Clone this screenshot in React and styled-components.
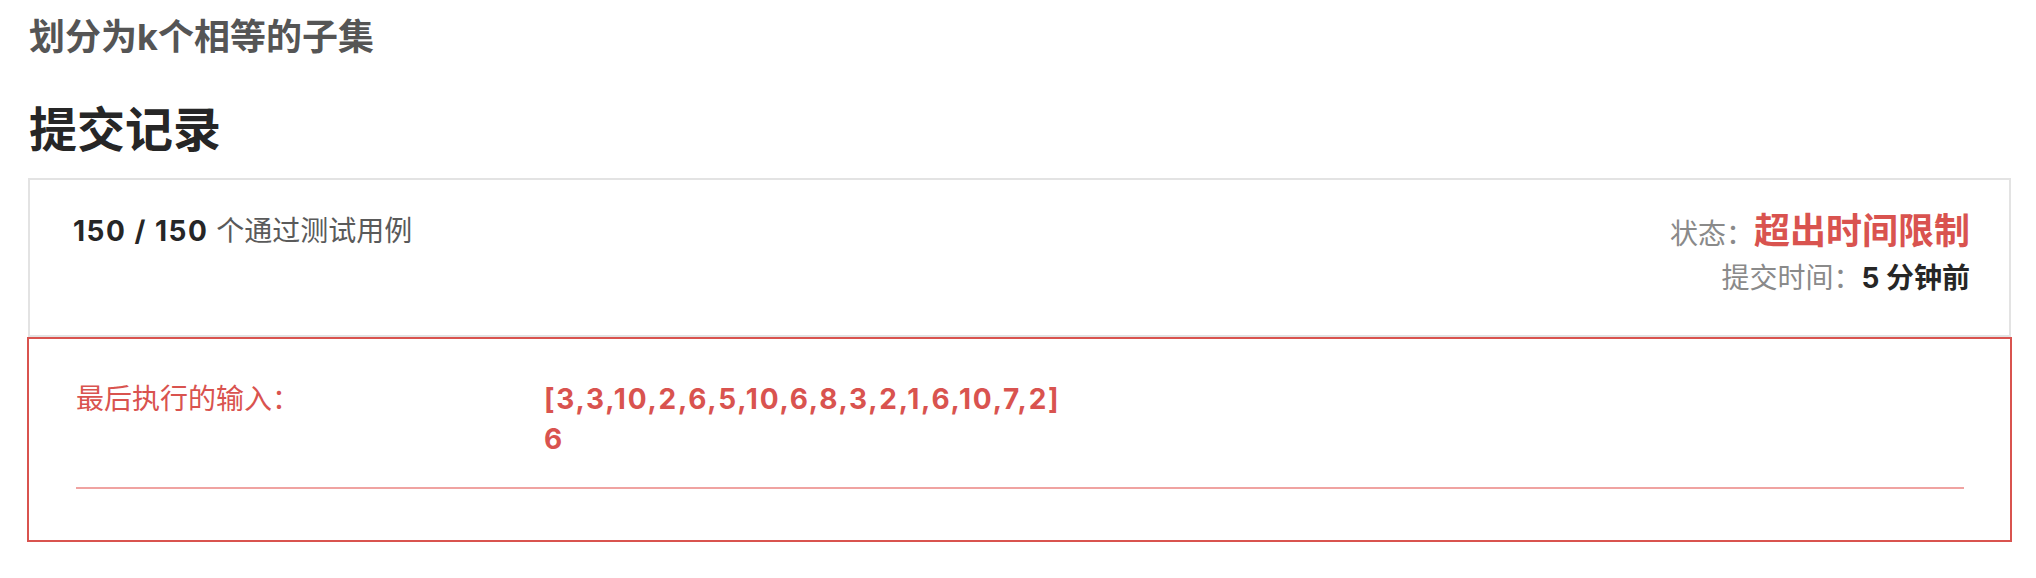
import React from "react";
import styled, { createGlobalStyle } from "styled-components";

const GlobalStyle = createGlobalStyle`
  body {
    margin: 0;
    background: #fff;
    font-family: Inter, "Noto Sans CJK SC", sans-serif;
  }
`;

const Page = styled.div`
  padding: 10px 25px 0 28px;
`;

const ProblemTitle = styled.div`
  font-size: 36px;
  line-height: 54px;
  font-weight: 700;
  color: #555;
  padding-left: 1px;
`;

const Heading = styled.h2`
  margin: 36px 0 18px;
  font-size: 48px;
  line-height: 60px;
  font-weight: 700;
  color: #262626;
  padding-left: 1px;
`;

const Panel = styled.div`
  border: 2px solid #e3e3e3;
  padding: 29px 39px 35px 43px;
  display: flex;
  justify-content: space-between;
  align-items: flex-start;
`;

const Passed = styled.div`
  font-size: 28px;
  line-height: 44px;
  color: #5a5a5a;
`;

const Strong = styled.b`
  font-weight: 700;
  color: ${({ tone }) => tone || "#262626"};
  font-size: ${({ big }) => (big ? "36px" : "inherit")};
  letter-spacing: ${({ spaced }) => (spaced ? "1.5px" : "0")};
`;

const Meta = styled.div`
  display: flex;
  flex-direction: column;
  align-items: flex-end;
`;

const MetaLine = styled.div`
  font-size: 28px;
  line-height: 44px;
  color: #8a8a8a;
  display: flex;
  align-items: baseline;
`;

const ErrorBox = styled.div`
  border: 2px solid #d9534f;
  margin: 0 -1px;
  padding: 40px 46px 51px 47px;
  color: #d9534f;
`;

const Row = styled.div`
  display: grid;
  grid-template-columns: 468px 1fr;
  font-size: 28px;
  line-height: 40px;
`;

const Label = styled.div`
  font-weight: 400;
`;

const Value = styled.div`
  font-weight: 700;
  letter-spacing: 1.75px;
  white-space: pre-line;
`;

const Rule = styled.hr`
  margin: 28px 0 0;
  border: 0;
  height: 2px;
  background: #f0a3a1;
`;

const App = () => (
  <>
    <GlobalStyle />
    <Page>
      <ProblemTitle>划分为k个相等的子集</ProblemTitle>
      <Heading>提交记录</Heading>
      <Panel>
        <Passed>
          <Strong spaced>150 / 150</Strong> 个通过测试用例
        </Passed>
        <Meta>
          <MetaLine>
            状态：<Strong big tone="#d9534f">超出时间限制</Strong>
          </MetaLine>
          <MetaLine>
            提交时间：<Strong>5 分钟前</Strong>
          </MetaLine>
        </Meta>
      </Panel>
      <ErrorBox>
        <Row>
          <Label>最后执行的输入：</Label>
          <Value>{"[3,3,10,2,6,5,10,6,8,3,2,1,6,10,7,2]\n6"}</Value>
        </Row>
        <Rule />
      </ErrorBox>
    </Page>
  </>
);

export default App;
